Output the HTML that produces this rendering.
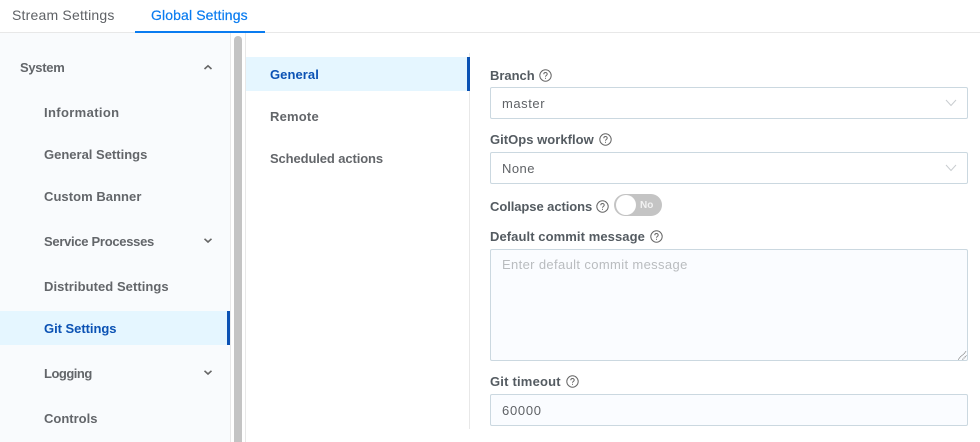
<!DOCTYPE html>
<html>
<head>
<meta charset="utf-8">
<style>
html,body{margin:0;padding:0;background:#fff}
body{width:980px;height:442px;overflow:hidden;position:relative;font-family:"Liberation Sans",sans-serif}
.a{position:absolute}
.t{position:absolute;white-space:nowrap;line-height:20px;height:20px}
.nav{font-size:13px;font-weight:700;color:#63666a}
.lab{font-size:13px;font-weight:700;color:#545b61}
.val{font-size:13px;color:#5f6266}
.box{position:absolute;left:490px;width:476px;border:1px solid #cbd8e0;border-radius:2px}
svg{position:absolute;display:block}
</style>
</head>
<body>
<div class="t" style="left:12px;top:5px;font-size:14px;color:#5f6266;letter-spacing:.2px">Stream Settings</div>
<div class="t" style="left:151px;top:5px;font-size:14px;color:#0a7cf0;letter-spacing:.12px;-webkit-text-stroke:.2px #0a7cf0">Global Settings</div>
<div class="a" style="left:0;top:32px;width:980px;height:1px;background:#e8e8e8"></div>
<div class="a" style="left:135px;top:31px;width:130px;height:2px;background:#0a7cf0"></div>

<div class="a" style="left:0;top:33px;width:230px;height:409px;background:#f9fbfd"></div>
<div class="a" style="left:230px;top:33px;width:1px;height:409px;background:#e8e8e8"></div>
<div class="a" style="left:234px;top:36px;width:8px;height:406px;background:#c4c4c4;border-radius:4px 4px 0 0"></div>
<div class="a" style="left:245px;top:33px;width:1px;height:409px;background:#e8e8e8"></div>

<div class="t nav" style="left:20px;top:58px;letter-spacing:-.3px">System</div>
<svg style="left:203px;top:64px" width="10" height="7" viewBox="0 0 10 7"><path d="M1.5 5 L5 1.8 L8.5 5" fill="none" stroke="#666" stroke-width="1.6"/></svg>
<div class="t nav" style="left:44px;top:103px;letter-spacing:.36px">Information</div>
<div class="t nav" style="left:44px;top:145px;letter-spacing:0">General Settings</div>
<div class="t nav" style="left:44px;top:187px;letter-spacing:.05px">Custom Banner</div>
<div class="t nav" style="left:44px;top:232px;letter-spacing:-.29px">Service Processes</div>
<svg style="left:203px;top:237px" width="10" height="7" viewBox="0 0 10 7"><path d="M1.5 1.8 L5 5 L8.5 1.8" fill="none" stroke="#666" stroke-width="1.6"/></svg>
<div class="t nav" style="left:44px;top:277px;letter-spacing:.06px">Distributed Settings</div>
<div class="a" style="left:0;top:311px;width:227px;height:34px;background:#e5f6ff"></div>
<div class="a" style="left:227px;top:311px;width:3px;height:34px;background:#0b52b4"></div>
<div class="t nav" style="left:44px;top:319px;color:#0b52b4;letter-spacing:-.04px">Git Settings</div>
<div class="t nav" style="left:44px;top:364px;letter-spacing:-.49px">Logging</div>
<svg style="left:203px;top:369px" width="10" height="7" viewBox="0 0 10 7"><path d="M1.5 1.8 L5 5 L8.5 1.8" fill="none" stroke="#666" stroke-width="1.6"/></svg>
<div class="t nav" style="left:44px;top:409px;letter-spacing:0">Controls</div>

<div class="a" style="left:246px;top:57px;width:221px;height:34px;background:#e5f6ff"></div>
<div class="a" style="left:467px;top:57px;width:3px;height:34px;background:#0b52b4"></div>
<div class="a" style="left:469px;top:53px;width:1px;height:4px;background:#e8e8e8"></div>
<div class="a" style="left:469px;top:91px;width:1px;height:338px;background:#e8e8e8"></div>
<div class="t nav" style="left:270px;top:65px;color:#0b52b4;letter-spacing:.07px">General</div>
<div class="t nav" style="left:270px;top:107px;letter-spacing:.2px">Remote</div>
<div class="t nav" style="left:270px;top:149px;letter-spacing:-.11px">Scheduled actions</div>

<div class="t lab" style="left:490px;top:66px;letter-spacing:-.03px">Branch</div>
<svg style="left:539px;top:69px" width="13" height="13" viewBox="0 0 13 13"><circle cx="6.5" cy="6.5" r="5.7" fill="none" stroke="#666" stroke-width="1"/><path d="M4.8 5.2 C4.8 3 8.2 3 8.2 5.1 C8.2 6.4 6.5 6.3 6.5 7.8" fill="none" stroke="#666" stroke-width="1"/><rect x="6" y="8.8" width="1" height="1" fill="#666"/></svg>
<div class="box" style="top:87px;height:30px;background:#fff"></div>
<div class="t val" style="left:502px;top:94px;letter-spacing:.56px">master</div>
<svg style="left:945px;top:99px" width="12" height="8" viewBox="0 0 12 8"><path d="M1 1 L6 6.5 L11 1" fill="none" stroke="#c9cdd0" stroke-width="1"/></svg>

<div class="t lab" style="left:490px;top:130px;letter-spacing:.03px">GitOps workflow</div>
<svg style="left:599px;top:133px" width="13" height="13" viewBox="0 0 13 13"><circle cx="6.5" cy="6.5" r="5.7" fill="none" stroke="#666" stroke-width="1"/><path d="M4.8 5.2 C4.8 3 8.2 3 8.2 5.1 C8.2 6.4 6.5 6.3 6.5 7.8" fill="none" stroke="#666" stroke-width="1"/><rect x="6" y="8.8" width="1" height="1" fill="#666"/></svg>
<div class="box" style="top:152px;height:30px;background:#fff"></div>
<div class="t val" style="left:502px;top:159px;letter-spacing:.47px">None</div>
<svg style="left:945px;top:164px" width="12" height="8" viewBox="0 0 12 8"><path d="M1 1 L6 6.5 L11 1" fill="none" stroke="#c9cdd0" stroke-width="1"/></svg>

<div class="t lab" style="left:490px;top:197px;letter-spacing:-.07px">Collapse actions</div>
<svg style="left:596px;top:200px" width="13" height="13" viewBox="0 0 13 13"><circle cx="6.5" cy="6.5" r="5.7" fill="none" stroke="#666" stroke-width="1"/><path d="M4.8 5.2 C4.8 3 8.2 3 8.2 5.1 C8.2 6.4 6.5 6.3 6.5 7.8" fill="none" stroke="#666" stroke-width="1"/><rect x="6" y="8.8" width="1" height="1" fill="#666"/></svg>
<div class="a" style="left:614px;top:194px;width:48px;height:22px;border-radius:11px;background:#c4c4c4"></div>
<div class="a" style="left:616px;top:195px;width:20px;height:20px;border-radius:50%;background:#fff"></div>
<div class="t" style="left:640px;top:195px;font-size:10px;font-weight:700;color:#f2f2f2;line-height:21px">No</div>

<div class="t lab" style="left:490px;top:227px;letter-spacing:.08px">Default commit message</div>
<svg style="left:650px;top:230px" width="13" height="13" viewBox="0 0 13 13"><circle cx="6.5" cy="6.5" r="5.7" fill="none" stroke="#666" stroke-width="1"/><path d="M4.8 5.2 C4.8 3 8.2 3 8.2 5.1 C8.2 6.4 6.5 6.3 6.5 7.8" fill="none" stroke="#666" stroke-width="1"/><rect x="6" y="8.8" width="1" height="1" fill="#666"/></svg>
<div class="box" style="top:249px;height:110px;background:#fafcff"></div>
<div class="t" style="left:502px;top:255px;font-size:13px;color:#b9bcbf;letter-spacing:.36px">Enter default commit message</div>
<svg style="left:958px;top:351px" width="9" height="9" viewBox="0 0 9 9"><path d="M0 8.5 L8.5 0 M4.5 8.5 L8.5 4.5" fill="none" stroke="#777" stroke-width="1" stroke-dasharray="1 .7"/></svg>

<div class="t lab" style="left:490px;top:372px;letter-spacing:.2px">Git timeout</div>
<svg style="left:566px;top:375px" width="13" height="13" viewBox="0 0 13 13"><circle cx="6.5" cy="6.5" r="5.7" fill="none" stroke="#666" stroke-width="1"/><path d="M4.8 5.2 C4.8 3 8.2 3 8.2 5.1 C8.2 6.4 6.5 6.3 6.5 7.8" fill="none" stroke="#666" stroke-width="1"/><rect x="6" y="8.8" width="1" height="1" fill="#666"/></svg>
<div class="box" style="top:394px;height:30px;background:#fafcff"></div>
<div class="t val" style="left:502px;top:401px;letter-spacing:.72px">60000</div>
</body>
</html>
